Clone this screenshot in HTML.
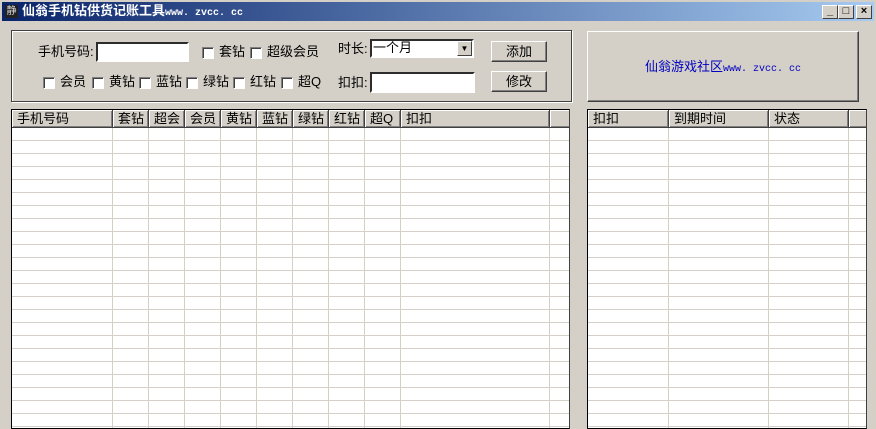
<!DOCTYPE html><html><head><meta charset="utf-8"><style>
*{margin:0;padding:0;box-sizing:border-box}
body{width:876px;height:418px;background:#d4d0c8;position:relative;overflow:hidden;font:12px "Liberation Sans","Noto Sans CJK SC",sans-serif;color:#000}
.a{position:absolute}
.tb{left:2px;top:2px;width:872px;height:19px;background:linear-gradient(90deg,#0a246a,#a6caf0)}
.tt{left:22px;top:3px;color:#fff;font-weight:bold;font-size:13px;line-height:16px;white-space:nowrap}
.tt span{font-family:"Liberation Mono",monospace;font-size:10px}
.wb{width:16px;height:14px;top:5px;background:#d4d0c8;border:1px solid;border-color:#fff #404040 #404040 #fff;font-size:11px;line-height:11px;text-align:center;font-weight:bold}
.grp{left:11px;top:30px;width:561px;height:72px;border:1px solid #404040;box-shadow:1px 1px 0 #fff,inset 1px 1px 0 #fff}
.in{background:#fff;border:2px inset #e0e0e0;border-color:#808080 #fff #fff #808080}
.cb{width:12px;height:12px;background:#fff;border:1px solid;border-color:#808080 #fff #fff #808080;box-shadow:inset 1px 1px 0 #404040}
.l{white-space:nowrap;line-height:14px}
.btn{width:56px;height:21px;border:1px solid;border-color:#fff #404040 #404040 #fff;box-shadow:inset -1px -1px 0 #808080;text-align:center;line-height:19px;font-size:13px}
.list{background-color:#fff;border:1px solid #000;border-right-color:#404040;overflow:hidden}
.hd{position:absolute;top:0;height:18px;background:#d4d0c8;border-right:1px solid #404040;border-bottom:1px solid #404040;box-shadow:inset 1px 1px 0 #fff,inset -1px -1px 0 #808080;padding-left:5px;line-height:17px;font-size:13px;white-space:nowrap}
.rows{position:absolute;left:0;right:0;top:18px;bottom:0;background-image:repeating-linear-gradient(180deg,transparent 0,transparent 12px,#d4d0c8 12px,#d4d0c8 13px)}
.vl{position:absolute;top:18px;bottom:0;width:1px;background:#d4d0c8}
</style></head><body>
<div class="a tb"></div>
<div class="a" style="left:5px;top:5px;width:13px;height:13px;background:#222;color:#ddd;font-size:10px;line-height:13px;text-align:center">静</div>
<div class="a tt">仙翁手机钻供货记账工具<span>www. zvcc. cc</span></div>
<div class="a wb" style="left:822px">_</div>
<div class="a wb" style="left:838px">□</div>
<div class="a wb" style="left:856px">×</div>

<div class="a grp"></div>
<div class="a l" style="left:38px;top:45px;font-size:13px">手机号码:</div>
<div class="a in" style="left:96px;top:42px;width:93px;height:20px"></div>
<div class="a cb" style="left:202px;top:47px"></div><div class="a l" style="left:219px;top:45px;font-size:13px">套钻</div>
<div class="a cb" style="left:250px;top:47px"></div><div class="a l" style="left:267px;top:45px;font-size:13px">超级会员</div>
<div class="a cb" style="left:43px;top:77px"></div><div class="a l" style="left:60px;top:75px;font-size:13px">会员</div>
<div class="a cb" style="left:92px;top:77px"></div><div class="a l" style="left:109px;top:75px;font-size:13px">黄钻</div>
<div class="a cb" style="left:139px;top:77px"></div><div class="a l" style="left:156px;top:75px;font-size:13px">蓝钻</div>
<div class="a cb" style="left:186px;top:77px"></div><div class="a l" style="left:203px;top:75px;font-size:13px">绿钻</div>
<div class="a cb" style="left:233px;top:77px"></div><div class="a l" style="left:250px;top:75px;font-size:13px">红钻</div>
<div class="a cb" style="left:281px;top:77px"></div><div class="a l" style="left:298px;top:75px;font-size:13px">超Q</div>
<div class="a l" style="left:338px;top:42px;font-size:13px">时长:</div>
<div class="a in" style="left:370px;top:39px;width:104px;height:19px"><div class="a l" style="left:1px;top:0;font-size:13px">一个月</div><div class="a" style="right:0;top:0;width:15px;height:15px;background:#d4d0c8;border:1px solid;border-color:#fff #404040 #404040 #fff;font-size:8px;text-align:center;line-height:13px">▼</div></div>
<div class="a l" style="left:338px;top:76px;font-size:13px">扣扣:</div>
<div class="a in" style="left:370px;top:72px;width:105px;height:21px"></div>
<div class="a btn" style="left:491px;top:41px">添加</div>
<div class="a btn" style="left:491px;top:71px">修改</div>

<div class="a" style="left:587px;top:31px;width:272px;height:71px;border:1px solid;border-color:#fff #404040 #404040 #fff;box-shadow:inset -1px -1px 0 #808080;text-align:center;line-height:69px;color:#0000c0;font-size:13px">仙翁游戏社区<span style="font-family:'Liberation Mono',monospace;font-size:10px">www. zvcc. cc</span></div>

<div class="a list" style="left:11px;top:109px;width:559px;height:320px">
<div class="rows"></div>
<div class="vl" style="left:100px"></div><div class="vl" style="left:136px"></div><div class="vl" style="left:172px"></div><div class="vl" style="left:208px"></div><div class="vl" style="left:244px"></div><div class="vl" style="left:280px"></div><div class="vl" style="left:316px"></div><div class="vl" style="left:352px"></div><div class="vl" style="left:388px"></div><div class="vl" style="left:537px"></div>
<div class="hd" style="left:0;width:101px">手机号码</div>
<div class="hd" style="left:101px;width:36px">套钻</div>
<div class="hd" style="left:137px;width:36px">超会</div>
<div class="hd" style="left:173px;width:36px">会员</div>
<div class="hd" style="left:209px;width:36px">黄钻</div>
<div class="hd" style="left:245px;width:36px">蓝钻</div>
<div class="hd" style="left:281px;width:36px">绿钻</div>
<div class="hd" style="left:317px;width:36px">红钻</div>
<div class="hd" style="left:353px;width:36px">超Q</div>
<div class="hd" style="left:389px;width:149px">扣扣</div>
<div class="hd" style="left:538px;width:30px"></div>
</div>

<div class="a list" style="left:587px;top:109px;width:280px;height:320px">
<div class="rows"></div>
<div class="vl" style="left:80px"></div><div class="vl" style="left:180px"></div><div class="vl" style="left:260px"></div>
<div class="hd" style="left:0;width:81px">扣扣</div>
<div class="hd" style="left:81px;width:100px">到期时间</div>
<div class="hd" style="left:181px;width:80px">状态</div>
<div class="hd" style="left:261px;width:30px"></div>
</div>
</body></html>
